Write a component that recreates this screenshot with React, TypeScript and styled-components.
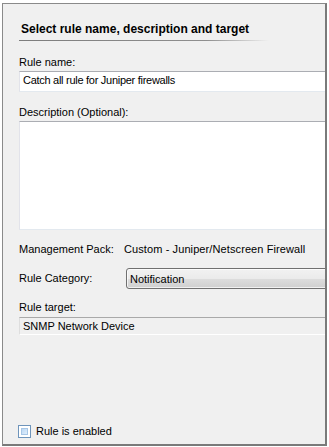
import styled, { createGlobalStyle } from "styled-components";

const GlobalStyle = createGlobalStyle`
  html, body {
    margin: 0;
    padding: 0;
    background: #ffffff;
  }

  body {
    font-family: "Liberation Sans", Arial, sans-serif;
    font-size: 11px;
    color: #000000;
  }
`;

const Frame = styled.div`
  box-sizing: border-box;
  display: flex;
  flex-direction: column;
  width: 325px;
  height: 443px;
  margin: 3px 0 0 2px;
  padding: 18px 0 6px 16px;
  background: #f0f0f0;
  border-top: 1px solid #8a8a8a;
  border-left: 1px solid #8a8a8a;
  border-right: 2px solid #7a7a7a;
  border-bottom: 2px solid #7a7a7a;
  overflow: hidden;
`;

const Heading = styled.div`
  padding-left: 2px;
  font-size: 12px;
  font-weight: bold;
  line-height: 14px;
`;

const HeadingRule = styled.div`
  width: 250px;
  height: 1px;
  margin-top: 4px;
  background: linear-gradient(to right, #7d7d7d 0%, #8f8f8f 75%, rgba(240, 240, 240, 0) 100%);
`;

const Label = styled.div<{ $gap: number }>`
  margin-top: ${({ $gap }) => $gap}px;
  line-height: 13px;
  white-space: nowrap;
`;

const TextBox = styled.div<{ $height: number; $gap?: number }>`
  box-sizing: border-box;
  height: ${({ $height }) => $height}px;
  margin: ${({ $gap = 2 }) => $gap}px -6px 0 0;
  padding: 2px 3px;
  line-height: 13px;
  letter-spacing: -0.28px;
  white-space: nowrap;
  background: #ffffff;
  border-top: 1px solid #abadb3;
  border-left: 1px solid #e2e3ea;
  border-right: 1px solid #dbdfe6;
  border-bottom: 1px solid #e3e9ef;
`;

const ReadOnlyBox = styled(TextBox)`
  padding: 2px 3px 1px;
  letter-spacing: 0;
  background: #f0f0f0;
  border-top: 1px solid #a9a9a9;
  border-left: 1px solid #dedede;
  border-bottom: 1px solid #ffffff;
`;

const InfoRow = styled.div<{ $gap: number }>`
  display: flex;
  align-items: center;
  margin-top: ${({ $gap }) => $gap}px;
  margin-right: -6px;
  line-height: 13px;
  white-space: nowrap;
`;

const RowLabel = styled.div<{ $width: number }>`
  flex: none;
  width: ${({ $width }) => $width}px;
`;

const RowValue = styled.div`
  letter-spacing: 0.1px;
`;

const Combo = styled.div`
  box-sizing: border-box;
  flex: 1;
  height: 21px;
  padding: 4px 3px 2px;
  border: 1px solid #707070;
  border-radius: 3px;
  background: linear-gradient(
    to bottom,
    #f2f2f2 0%,
    #ebebeb 50%,
    #dddddd 51%,
    #cfcfcf 100%
  );
  box-shadow: inset 0 0 0 1px rgba(255, 255, 255, 0.7);
`;

const CheckRow = styled.label`
  display: flex;
  align-items: center;
  gap: 5px;
  margin-top: auto;
  margin-left: -1px;
  line-height: 13px;
`;

const CheckBox = styled.span`
  box-sizing: border-box;
  width: 13px;
  height: 13px;
  padding: 2px;
  border: 1px solid #6e94bb;
  background: #ffffff;

  &::after {
    content: "";
    display: block;
    box-sizing: border-box;
    width: 7px;
    height: 7px;
    border: 1px solid #a7c6e6;
    background: linear-gradient(135deg, #bcd8f3 0%, #dfeefc 100%);
  }
`;

export default function App() {
  return (
    <>
      <GlobalStyle />
      <Frame>
        <Heading>Select rule name, description and target</Heading>
        <HeadingRule />

        <Label $gap={15}>Rule name:</Label>
        <TextBox $height={21}>Catch all rule for Juniper firewalls</TextBox>

        <Label $gap={14}>Description (Optional):</Label>
        <TextBox $height={109} />

        <InfoRow $gap={13}>
          <RowLabel $width={105}>Management Pack:</RowLabel>
          <RowValue>Custom - Juniper/Netscreen Firewall</RowValue>
        </InfoRow>

        <InfoRow $gap={12}>
          <RowLabel $width={107}>Rule Category:</RowLabel>
          <Combo>Notification</Combo>
        </InfoRow>

        <Label $gap={12}>Rule target:</Label>
        <ReadOnlyBox $height={18} $gap={3}>SNMP Network Device</ReadOnlyBox>

        <CheckRow>
          <CheckBox />
          Rule is enabled
        </CheckRow>
      </Frame>
    </>
  );
}
